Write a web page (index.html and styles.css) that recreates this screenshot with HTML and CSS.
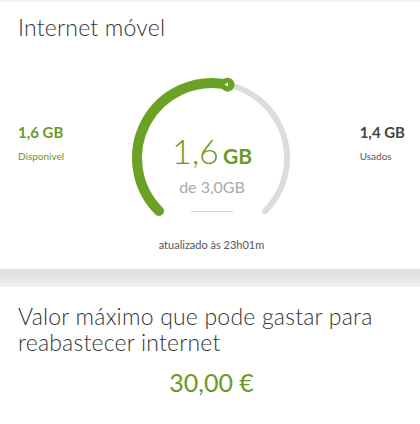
FILE: index.html
```html
<!DOCTYPE html>
<html>
<head>
    <title>Internet móvel</title>
    <link rel="stylesheet" href="styles.css">
</head>
<body>
    <section class="card usage-card">
        <h1 class="card-title">Internet móvel</h1>
        <div class="usage-row">
            <div class="stat stat-left">
                <span class="stat-value">1,6 GB</span>
                <span class="stat-label">Disponivel</span>
            </div>
            <div class="gauge">
                <svg class="gauge-svg" width="170" height="148" viewBox="0 0 170 148">
                    <path d="M 31.97 138.03 A 75 75 0 1 1 138.03 138.03" fill="none" stroke="#dcdcdc" stroke-width="6" stroke-linecap="round"/>
                    <path d="M 31.97 138.03 A 75 75 0 0 1 100.59 11.64" fill="none" stroke="#6ba125" stroke-width="10" stroke-linecap="round"/>
                    <circle cx="100.59" cy="11.64" r="7" fill="#6ba125"/>
                    <path d="M 97.5 11.6 L 101 9.4 L 101 13.8 Z" fill="#fff"/>
                </svg>
                <div class="gauge-center">
                    <div class="gauge-value"><span class="gauge-num">1,6</span> <span class="gauge-unit">GB</span></div>
                    <div class="gauge-total">de 3,0GB</div>
                    <div class="gauge-rule"></div>
                </div>
            </div>
            <div class="stat stat-right">
                <span class="stat-value">1,4 GB</span>
                <span class="stat-label">Usados</span>
            </div>
        </div>
        <p class="updated">atualizado às 23h01m</p>
    </section>
    <div class="separator"></div>
    <section class="card limit-card">
        <h2 class="card-title">Valor máximo que pode gastar para reabastecer internet</h2>
        <p class="limit-value">30,00 €</p>
    </section>
</body>
</html>
```

FILE: styles.css
```css
body {
    margin: 0;
    background: #fff;
    font-family: Lato, "Open Sans", sans-serif;
    color: #333;
}
.card {
    background: #fff;
    padding: 12px 15px 0 18px;
}
.usage-card {
    height: 269px;
    border-top: 2px solid #f3f3f3;
    box-sizing: border-box;
}
.card-title {
    margin: 0;
    font-size: 23px;
    font-weight: 300;
    letter-spacing: 0.2px;
    line-height: 26px;
    color: #333;
}
.usage-row {
    display: grid;
    grid-template-columns: 109px 170px 1fr;
    align-items: start;
    margin-top: 33px;
}
.stat {
    display: flex;
    flex-direction: column;
    padding-top: 50px;
}
.stat-right {
    justify-self: end;
}
.stat-value {
    font-size: 15px;
    font-weight: 700;
    line-height: 18px;
}
.stat-label {
    font-size: 10px;
    line-height: 14px;
    margin-top: 8px;
}
.stat-left {
    color: #6a9a26;
}
.stat-right .stat-value {
    color: #444;
}
.stat-right .stat-label {
    color: #555;
}
.gauge {
    position: relative;
    width: 170px;
    height: 148px;
}
.gauge-svg {
    display: block;
}
.gauge-center {
    position: absolute;
    left: 0;
    right: 0;
    top: 58px;
    display: flex;
    flex-direction: column;
    align-items: center;
}
.gauge-value {
    color: #6a9a26;
    line-height: 40px;
}
.gauge-num {
    font-size: 34px;
    font-weight: 300;
}
.gauge-unit {
    font-size: 21px;
    font-weight: 700;
}
.gauge-total {
    font-size: 16px;
    color: #aaa;
    line-height: 18px;
}
.gauge-rule {
    width: 42px;
    height: 1px;
    background: #d4d4d4;
    margin-top: 15px;
}
.updated {
    margin: 17px 0 0;
    text-align: center;
    font-size: 11px;
    color: #555;
}
.separator {
    height: 18px;
    background: linear-gradient(#e0e0e0, #e8e8e8 70%, #f4f4f4);
}
.limit-card {
    padding-top: 16px;
}
.limit-value {
    margin: 12px 0 0;
    text-align: center;
    font-size: 25px;
    color: #6a9a26;
}
```
